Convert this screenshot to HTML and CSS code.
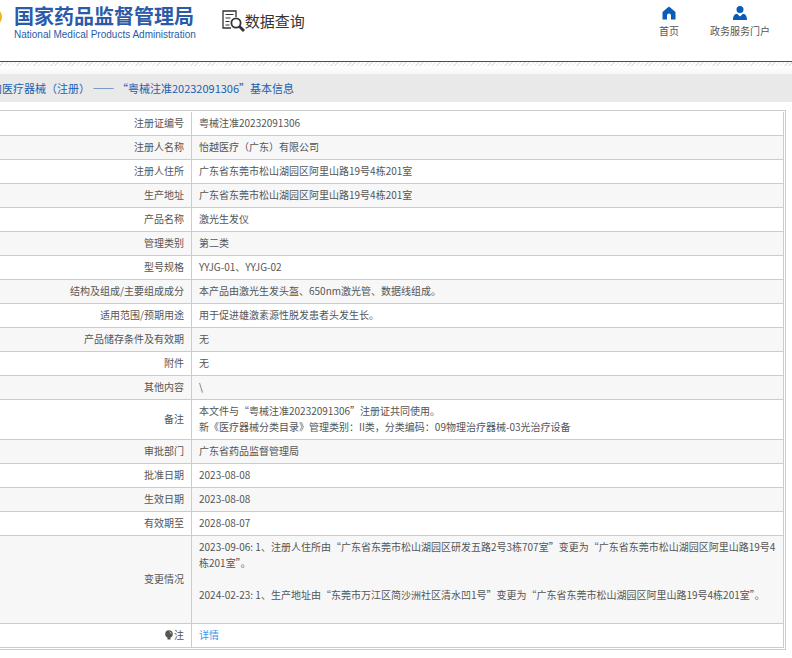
FILE: index.html
```
<!DOCTYPE html>
<html lang="zh-CN">
<head>
    <meta charset="UTF-8">
    <meta name="viewport" content="width=device-width, initial-scale=1.0">
    <title>国家药品监督管理局 数据查询</title>
    <link rel="stylesheet" href="styles.css">
</head>
<body>
    <header class="header">
        <a class="logo" href="#">
            <svg class="emblem" width="4" height="28" viewBox="0 0 4 28" aria-hidden="true">
                <circle cx="-7" cy="14" r="9" fill="#f0b323"/>
                <circle cx="-7" cy="14" r="7" fill="#d98c2b"/>
            </svg>
            <span class="logo-text">
                <span class="logo-cn">国家药品监督管理局</span>
                <span class="logo-en">National Medical Products Administration</span>
            </span>
        </a>
        <a class="query" href="#">
            <svg width="23" height="22" viewBox="0 0 23 22" fill="none" stroke="#333" aria-hidden="true">
                <path d="M14 7V1H1v17H9" stroke-width="1.300"/>
                <path d="M3.500 4.500h8M3.500 8h5M3.500 11.500h4M3.500 15h4" stroke-width="1.200"/>
                <circle cx="14" cy="13" r="4.600" stroke-width="1.800"/>
                <path d="M17.500 16.500l4.500 4.500" stroke-width="2.800"/>
            </svg>
            <span>数据查询</span>
        </a>
        <nav class="nav">
            <a href="#">
                <svg width="14" height="14" viewBox="0 0 14 14" fill="#0a5cb8" aria-hidden="true">
                    <path d="M7 0.500L0.500 6v7.500H5V9.500a2 2 0 0 1 4 0v4h4.500V6z"/>
                </svg>
                <span>首页</span>
            </a>
            <a href="#">
                <svg width="14" height="14" viewBox="0 0 14 14" fill="#0a5cb8" aria-hidden="true">
                    <circle cx="7" cy="3.500" r="3.500"/>
                    <path d="M0 14c0-4 1.500-5.800 4-6.200L7 10.500l3-2.700c2.500.4 4 2.200 4 6.200z"/>
                </svg>
                <span>政务服务门户</span>
            </a>
        </nav>
    </header>
    <div class="stripe"></div>

    <h1 class="title">内医疗器械（注册） —— “粤械注准20232091306”基本信息</h1>

    <main class="panel">
        <table class="info">
            <tr><th scope="row">注册证编号</th><td>粤械注准20232091306</td></tr>
            <tr><th scope="row">注册人名称</th><td>怡越医疗（广东）有限公司</td></tr>
            <tr><th scope="row">注册人住所</th><td>广东省东莞市松山湖园区阿里山路19号4栋201室</td></tr>
            <tr><th scope="row">生产地址</th><td>广东省东莞市松山湖园区阿里山路19号4栋201室</td></tr>
            <tr><th scope="row">产品名称</th><td>激光生发仪</td></tr>
            <tr><th scope="row">管理类别</th><td>第二类</td></tr>
            <tr><th scope="row">型号规格</th><td>YYJG-01、YYJG-02</td></tr>
            <tr><th scope="row">结构及组成/主要组成成分</th><td>本产品由激光生发头盔、650nm激光管、数据线组成。</td></tr>
            <tr><th scope="row">适用范围/预期用途</th><td>用于促进雄激素源性脱发患者头发生长。</td></tr>
            <tr><th scope="row">产品储存条件及有效期</th><td>无</td></tr>
            <tr><th scope="row">附件</th><td>无</td></tr>
            <tr><th scope="row">其他内容</th><td>\</td></tr>
            <tr><th scope="row">备注</th><td>本文件与“粤械注准20232091306”注册证共同使用。<br>新《医疗器械分类目录》管理类别：II类，分类编码：09物理治疗器械-03光治疗设备</td></tr>
            <tr><th scope="row">审批部门</th><td>广东省药品监督管理局</td></tr>
            <tr><th scope="row">批准日期</th><td>2023-08-08</td></tr>
            <tr><th scope="row">生效日期</th><td>2023-08-08</td></tr>
            <tr><th scope="row">有效期至</th><td>2028-08-07</td></tr>
            <tr><th scope="row">变更情况</th><td>2023-09-06: 1、注册人住所由“广东省东莞市松山湖园区研发五路2号3栋707室”变更为“广东省东莞市松山湖园区阿里山路19号4栋201室”。<br><br>2024-02-23: 1、生产地址由“东莞市万江区简沙洲社区清水凹1号”变更为“广东省东莞市松山湖园区阿里山路19号4栋201室”。<br><br></td></tr>
            <tr>
                <th scope="row"><svg class="bulb" width="8" height="10" viewBox="0 0 8 10" aria-hidden="true"><circle cx="4" cy="4" r="3.800" fill="#555"/><path d="M2.500 7h3v2.500h-3z" fill="#555"/><path d="M4.500 1.800a2 2 0 0 1 1.500 2" stroke="#ccc" fill="none"/></svg>注</th>
                <td><a href="#">详情</a></td>
            </tr>
        </table>
    </main>
</body>
</html>
```
FILE: styles.css
```
body {
    margin: 0;
    background: #fff;
    color: #555;
    font-family: "Noto Sans CJK SC", sans-serif;
    font-size: 10px;
    line-height: 16px;
    overflow-x: hidden;
}

a {
    color: inherit;
    text-decoration: none;
}

.header {
    display: flex;
    align-items: flex-start;
    height: 61px;
    border-bottom: 1px solid #1d5a8e;
}

.logo {
    display: flex;
    gap: 10px;
    padding-top: 3px;
    color: #2b5ba8;
}

.logo-text {
    display: flex;
    flex-direction: column;
}

.logo-cn {
    font-size: 20px;
    font-weight: 700;
    line-height: 26px;
}

.logo-en {
    font-family: "Liberation Sans", sans-serif;
    line-height: 12px;
}

.query {
    display: flex;
    align-items: center;
    margin-left: 26px;
    padding-top: 10px;
    color: #333;
    font-size: 15px;
    line-height: 22px;
}

.nav {
    display: flex;
    gap: 31px;
    margin-left: auto;
    padding: 6px 22px 0 0;
}

.nav a {
    display: flex;
    flex-direction: column;
    align-items: center;
    gap: 3px;
}

.stripe {
    height: 12px;
    background:
        linear-gradient(to bottom, transparent 4px, #fff 4px, #f7f7f7),
        repeating-linear-gradient(135deg, #fff 0 2px, #e4e4e4 2px 3px);
}

.title {
    margin: 0 0 8px;
    padding: 4px 0;
    background: #e9e9e9;
    color: #1a5fb0;
    font-size: 11px;
    font-weight: 400;
    line-height: 20px;
    text-indent: -9px;
    white-space: nowrap;
}

.panel {
    margin-right: 6px;
    padding: 1px 1px 1px 0;
    border: 1px solid #ccc;
    border-left: 0;
}

.info {
    width: 100%;
    border-collapse: separate;
    border-spacing: 0;
    border-right: 1px solid #ccc;
}

.info th,
.info td {
    padding: 3px 4px 4px 7px;
    border-bottom: 1px solid #ccc;
    vertical-align: middle;
}

.info th {
    width: 177px;
    padding-right: 7px;
    border-right: 1px solid #ccc;
    font-weight: 400;
    text-align: right;
}

.info tr:nth-child(even) {
    background: #f7f7f7;
}

.info td a {
    color: #3c96f0;
}

.bulb {
    margin-right: 1px;
    vertical-align: -1px;
}
```
